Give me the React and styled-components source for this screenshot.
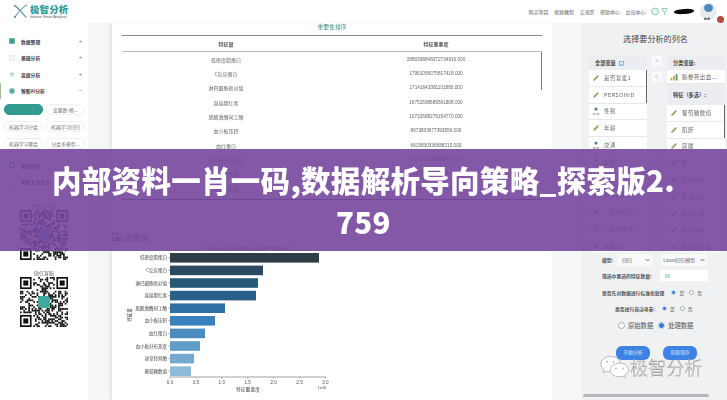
import React from "react";
import styled, { createGlobalStyle } from "styled-components";

const CJK = `"Noto Sans CJK SC", "Liberation Sans", sans-serif`;

const Global = createGlobalStyle`
  html, body { margin: 0; padding: 0; background: #fff; }
  body { font-family: ${CJK}; width: 727px; height: 400px; overflow: hidden; }
  * { box-sizing: border-box; }
`;

const Stage = styled.div`
  position: relative;
  width: 727px;
  height: 400px;
  overflow: hidden;
`;
const Page = styled.div`
  width: 727px;
  height: 400px;
  display: flex;
  flex-direction: column;
  background: #fff;
  filter: blur(0.5px);
`;

/* header */
const Header = styled.header`
  height: 23px;
  flex: none;
  display: flex;
  align-items: center;
  justify-content: space-between;
  padding: 0 3px 0 13px;
  background: #fff;
`;
const Logo = styled.div`
  display: flex;
  align-items: center;
  gap: 2px;
`;
const LogoText = styled.div`
  display: flex;
  flex-direction: column;
  gap: 1px;
`;
const LogoName = styled.div`
  font-size: 9.5px;
  line-height: 10px;
  font-weight: 900;
  letter-spacing: 0.1px;
  color: #2f9c93;
`;
const LogoSub = styled.div`
  font: 3.6px/4px "Liberation Sans", sans-serif;
  color: #555;
`;
const Nav = styled.nav`
  display: flex;
  align-items: center;
`;
const NavLink = styled.span`
  font-size: 5px;
  line-height: 8px;
  color: #666;
  margin-right: 5.5px;
`;
const Scribble = styled.div`
  width: 20px;
  height: 5px;
  margin: 0 6px 0 6px;
  background: #0c0c0c;
  border-radius: 50% 40% 50% 40%;
  transform: rotate(-3deg);
`;
const Avatar = styled.div`
  position: relative;
  width: 17px;
  height: 17px;
  border-radius: 50%;
  background: #e6ebef;
  margin-right: 7px;
  margin-top: -1px;
  display: flex;
  justify-content: center;
`;
const AvatarBlob = styled.div`
  width: 9px;
  height: 8px;
  margin-top: 1px;
  border-radius: 50%;
  background: #4f86c0;
`;
const AvatarName = styled.span`
  position: absolute;
  bottom: -1px;
  left: 4px;
  font: bold 3.5px/4px "Liberation Sans", sans-serif;
  color: #222;
`;
const Badge = styled.span`
  position: absolute;
  right: -7px;
  bottom: -3px;
  width: 7px;
  height: 7px;
  border-radius: 50%;
  background: #b8483a;
`;

/* body */
const Body = styled.div`
  flex: 1;
  min-height: 0;
  display: flex;
`;

/* sidebar */
const Sidebar = styled.aside`
  width: 88px;
  flex: none;
  padding-top: 10px;
  display: flex;
  flex-direction: column;
  background: #fff;
`;
const MenuItem = styled.div`
  height: 16.5px;
  display: flex;
  align-items: center;
  padding-left: 8px;
  padding-right: 6px;
  border-left: 1px solid ${p => (p.$active ? "#9cc79a" : "transparent")};
  font-size: 4.8px;
  font-weight: 700;
  color: #444;
`;
const MenuIconSlot = styled.span`
  width: 6px;
  height: 6px;
  margin-right: 6px;
  display: flex;
`;
const MenuLabel = styled.span`
  flex: 1;
`;
const MenuMark = styled.span`
  font-size: 6px;
  font-weight: 400;
  color: #777;
`;
const SubGrid = styled.div`
  display: grid;
  grid-template-columns: 39px 39px;
  grid-auto-rows: 11px;
  row-gap: 6px;
  column-gap: 3px;
  padding: 5px 0 8px 4px;
`;
const SubBtn = styled.div`
  border-radius: 5px;
  border: 1px solid ${p => (p.$active ? "#329a8e" : "#f0f0f0")};
  background: ${p => (p.$active ? "#329a8e" : "#fff")};
  font-size: 4.8px;
  line-height: 9px;
  text-align: center;
  color: #777;
  white-space: nowrap;
  overflow: hidden;
`;
const QrCaption = styled.div`
  text-align: center;
  font-size: 5px;
  line-height: 7px;
  color: #666;
  margin-top: ${p => p.$top}px;
  margin-bottom: 1px;
`;
const QrBox = styled.div`
  position: relative;
  width: 48px;
  height: 50px;
  margin-left: 20px;
`;
const QrLogo = styled.div`
  position: absolute;
  left: 18px;
  top: 19px;
  width: 12px;
  height: 12px;
  border-radius: 3px;
  background: ${p => p.$color};
`;

/* gutters */
const Gutter = styled.div`
  width: 24px;
  flex: none;
  background: #f6f6f6;
`;
const GutterNarrow = styled.div`
  width: 30px;
  flex: none;
  background: #f7f7f7;
`;

/* main */
const Main = styled.main`
  width: 440px;
  flex: none;
  display: flex;
  flex-direction: column;
  background: #fff;
  box-shadow: -2px 0 3px rgba(0, 0, 0, 0.08);
  overflow: hidden;
`;
const TableCard = styled.section`
  height: 190px;
  padding: 0 10px;
  flex: none;
  box-shadow: 0 1px 3px rgba(0, 0, 0, 0.1);
`;
const TableTitle = styled.div`
  height: 12px;
  padding-top: 1px;
  line-height: 6px;
  font-size: 5.8px;
  text-align: center;
  color: #3c8c88;
`;
const TableFrame = styled.div`
  position: relative;
  height: 165px;
  border-top: 1px solid #888;
  border-bottom: 1px solid #555;
`;
const TableHead = styled.div`
  display: grid;
  grid-template-columns: 208px 212px;
  height: 16px;
  align-items: center;
  text-align: center;
  font-size: 5px;
  font-weight: 600;
  color: #555;
  border-bottom: 1px solid #bbb;
`;
const TableRow = styled.div`
  display: grid;
  grid-template-columns: 208px 212px;
  height: 14.33px;
  align-items: center;
  text-align: center;
  font-size: 5px;
  color: #666;
`;
const TableNum = styled.span`
  font: 4.7px "Liberation Sans", sans-serif;
`;
const TableThumb = styled.div`
  position: absolute;
  right: 0;
  top: 16px;
  width: 1.5px;
  height: 38px;
  background: #777;
`;
const SectionTitle = styled.h3`
  margin: 17px 0 0;
  height: 13px;
  display: flex;
  align-items: center;
  gap: 2px;
  font-size: 8.5px;
  font-weight: 400;
  color: #5a5a5a;
`;
const ChartSvg = styled.svg`
  display: block;
  width: 440px;
  height: 157px;
  flex: none;
`;

/* right panel */
const Panel = styled.aside`
  flex: 1;
  min-width: 0;
  background: #f0f1f3;
  display: flex;
  flex-direction: column;
  padding: 0 2px 0 7px;
`;
const PanelTitle = styled.h2`
  margin: 0;
  height: 33px;
  padding-top: 9px;
  font-size: 8.1px;
  line-height: 14px;
  font-weight: 400;
  color: #444;
  text-align: center;
  padding-right: 3px;
`;
const Transfer = styled.div`
  display: grid;
  grid-template-columns: 58px 20px 58px;
  height: 196px;
`;
const Column = styled.div`
  display: flex;
  flex-direction: column;
  overflow: hidden;
`;
const ColumnHead = styled.div`
  height: ${p => p.$h}px;
  flex: none;
  display: flex;
  align-items: flex-start;
  gap: 3px;
  padding-left: ${p => p.$pad || 6}px;
  padding-top: ${p => p.$top || 3}px;
  font-size: 5.2px;
  line-height: 8px;
  font-weight: 600;
  color: #444;
  background: #ebedf0;
`;
const ListBox = styled.div`
  position: relative;
  flex: 1;
  min-height: 0;
  overflow: hidden;
`;
const ListRow = styled.div`
  height: ${p => p.$h || 16.8}px;
  display: flex;
  align-items: center;
  gap: 4px;
  padding-left: 3px;
  background: #fff;
  border-bottom: 1px solid #e8e8e8;
  font-size: 5.4px;
  letter-spacing: 0.55px;
  color: #666;
  white-space: nowrap;
`;
const ListThumb = styled.div`
  position: absolute;
  right: 0;
  top: 0;
  width: 1.5px;
  height: 33px;
  background: #666;
`;
const Arrows = styled.div`
  display: flex;
  flex-direction: column;
  align-items: center;
  gap: 6px;
  padding-right: 1px;
`;
const ArrowBtn = styled.div`
  width: 10px;
  height: 10px;
  background: #fafafa;
  font: 7px/10px "Liberation Sans", sans-serif;
  text-align: center;
  color: #bbb;
  margin-top: ${p => p.$top || 0}px;
`;
const Form = styled.div`
  display: flex;
  flex-direction: column;
  font-size: 4.8px;
  color: #555;
`;
const FormRow = styled.div`
  display: flex;
  align-items: center;
  height: ${p => p.$h}px;
  padding-left: ${p => p.$pad}px;
`;
const FieldLabel = styled.span`
  font-weight: 600;
  white-space: nowrap;
  color: #555;
`;
const SelectBox = styled.div`
  height: 12px;
  width: ${p => p.$w}px;
  margin-left: ${p => p.$ml}px;
  background: #f8f9fa;
  display: flex;
  align-items: center;
  justify-content: space-between;
  padding: 0 2px 0 ${p => p.$pad}px;
  white-space: nowrap;
  color: #666;
`;
const NumberBox = styled.div`
  width: 48px;
  height: 11px;
  margin-left: 8px;
  background: #fff;
  padding-left: 5px;
  line-height: 11px;
  color: #666;
`;
const RadioDot = styled.span`
  width: ${p => p.$s}px;
  height: ${p => p.$s}px;
  border-radius: 50%;
  flex: none;
  background: ${p => (p.$on ? "#3a7bd0" : "#fff")};
  border: ${p => (p.$on ? `1px solid #cfdcef` : "0.5px solid #aaa")};
  margin: 0 3px 0 ${p => p.$ml || 0}px;
`;
const BigOption = styled.span`
  font-size: 6.3px;
  color: #555;
`;
const RunButtons = styled.div`
  display: flex;
  gap: 13px;
  padding: 10px 0 0 27px;
`;
const RunButton = styled.div`
  width: 34px;
  height: 14px;
  border-radius: 6px;
  background: #3e82e4;
  color: #dce9fb;
  font-size: 4.8px;
  line-height: 12px;
  text-align: center;
`;
const PanelFoot = styled.div`
  margin-top: auto;
  margin-bottom: 3px;
  margin-left: -6px;
  width: 126px;
  height: 3px;
  border-radius: 2px;
  background: #b4b6ba;
`;

/* overlays */
const Banner = styled.div`
  position: absolute;
  left: 0;
  right: 0;
  top: 149px;
  height: 102px;
  padding: 9px 48px 0;
  background: rgba(118, 70, 157, 0.9);
`;
const BannerText = styled.h1`
  margin: 0;
  font-family: ${CJK};
  font-size: 29.5px;
  letter-spacing: 0.3px;
  line-height: 42px;
  font-weight: 900;
  color: #fff;
  text-align: center;
  word-break: break-all;
`;
const Watermark = styled.div`
  position: absolute;
  left: 600px;
  top: 354px;
  display: flex;
  align-items: center;
  gap: 0;
`;
const WatermarkText = styled.span`
  font-size: 18px;
  line-height: 24px;
  font-weight: 300;
  letter-spacing: 0.2px;
  color: rgba(255, 255, 255, 0.85);
  -webkit-text-stroke: 0.4px #8b8b8b;
`;

/* drawings */
function LogoMark() {
  return (
    <svg width="15" height="15" viewBox="0 0 15 15" fill="none">
      <path d="M1 1.5 C5 2 8 9 13.5 13.5" stroke="#5b9c98" strokeWidth="1.3" />
      <path d="M14 1 C9 3 5 9 1.5 13.5" stroke="#7d9c9c" strokeWidth="1.1" />
      <circle cx="2" cy="13" r="1" fill="#3f9c94" />
    </svg>
  );
}
function Pencil({ color = "#a3a36c" }) {
  return (
    <svg width="8" height="8" viewBox="0 0 7 7" style={{ flex: "none" }}>
      <path d="M1 6 L1.4 4.4 L5 .9 L6.1 2 L2.6 5.6 Z" fill={color} />
    </svg>
  );
}
function People() {
  return (
    <svg width="8" height="8" viewBox="0 0 7 7" style={{ flex: "none" }}>
      <circle cx="3.5" cy="1.8" r="1.4" fill="#5b7fae" />
      <path d="M.5 6.5 A1.6 1.6 0 0 1 3.4 6.5Z" fill="#6aa56a" />
      <path d="M3.6 6.5 A1.6 1.6 0 0 1 6.6 6.5Z" fill="#b86a5e" />
    </svg>
  );
}
function Bars() {
  return (
    <svg width="8" height="8" viewBox="0 0 7 7" style={{ flex: "none" }}>
      <rect x=".5" y="4" width="1.5" height="2.5" fill="#c9a73c" />
      <rect x="2.7" y="2.5" width="1.5" height="4" fill="#c9a73c" />
      <rect x="5" y="1" width="1.5" height="5.5" fill="#5b8c5a" />
    </svg>
  );
}
function Chevron() {
  return (
    <svg width="5" height="4" viewBox="0 0 5 4" style={{ flex: "none" }}>
      <path d="M.6 1 L2.5 3 L4.4 1" fill="none" stroke="#555" strokeWidth=".8" />
    </svg>
  );
}
function ListGlyph() {
  return (
    <svg width="5" height="5" viewBox="0 0 5 5" style={{ flex: "none", marginTop: 2 }}>
      <rect x=".4" y=".4" width="4.2" height="4.2" fill="none" stroke="#6f9fd0" strokeWidth=".7" />
      <path d="M1.4 3.4 H3.6" stroke="#6f9fd0" strokeWidth=".6" />
    </svg>
  );
}
function MenuGlyph({ kind }) {
  if (kind === "square")
    return (
      <svg width="6" height="6" viewBox="0 0 6 6">
        <rect width="6" height="6" rx="1" fill="#5fb3a2" />
        <rect x="1.5" y="1.5" width="3" height="3" fill="#3d8f80" />
      </svg>
    );
  if (kind === "outline")
    return (
      <svg width="6" height="6" viewBox="0 0 6 6">
        <rect x=".5" y=".5" width="5" height="5" fill="#f4f6f4" stroke="#dfe4df" strokeWidth=".6" />
      </svg>
    );
  if (kind === "star")
    return (
      <svg width="6" height="6" viewBox="0 0 6 6">
        <path d="M3 0 L3.8 2.1 L6 2.3 L4.3 3.7 L4.9 6 L3 4.7 L1.1 6 L1.7 3.7 L0 2.3 L2.2 2.1 Z" fill="#b9d8cf" />
      </svg>
    );
  if (kind === "circle")
    return (
      <svg width="6" height="6" viewBox="0 0 6 6">
        <circle cx="3" cy="3" r="3" fill="#7fc2b5" />
        <circle cx="3" cy="3" r="1.4" fill="#4b9f90" />
      </svg>
    );
  if (kind === "chart")
    return (
      <svg width="6" height="6" viewBox="0 0 6 6">
        <circle cx="3" cy="3" r="2.6" fill="none" stroke="#4d7fb5" strokeWidth="1.2" />
      </svg>
    );
  return (
    <svg width="6" height="6" viewBox="0 0 6 6">
      <rect x=".5" y=".5" width="5" height="5" fill="none" stroke="#c6ccd2" strokeWidth=".7" />
    </svg>
  );
}
function NavIcons() {
  return (
    <svg width="17" height="9" viewBox="0 0 17 9">
      <circle cx="4" cy="4.5" r="3.4" fill="#e6f3ee" stroke="#8ccab6" strokeWidth="1" />
      <path d="M11 1.5 H16 L15.4 4 Q13.5 6 11.6 4 Z M13.5 5.5 V8" fill="none" stroke="#93cdb8" strokeWidth="1" />
    </svg>
  );
}
function ImageGlyph() {
  return (
    <svg width="10" height="8" viewBox="0 0 10 8">
      <rect x=".5" y=".5" width="9" height="7" fill="none" stroke="#555" strokeWidth=".8" />
      <path d="M1.5 6.5 L4 3.5 L5.5 5 L7 3.5 L8.5 6.5 Z" fill="#555" />
    </svg>
  );
}
function WeChat() {
  return (
    <svg width="30" height="25" viewBox="0 0 31 25">
      <g fill="rgba(255,255,255,.95)" stroke="#9a9a9a" strokeWidth=".7">
        <path d="M11 2 C4.5 2 1 6 1 10 C1 12.6 2.4 14.6 4.4 16 L3.4 19 L7 17.3 C8.4 17.8 9.6 18 11 18 C17 18 21 14.5 21 10 C21 6 17 2 11 2 Z" />
        <path d="M20 9 C14.5 9 10.5 12.4 10.5 16 C10.5 20 14.5 23 20 23 C21.2 23 22.2 22.8 23.2 22.5 L26.4 24 L25.6 21.4 C27.8 20 29.5 18.2 29.5 16 C29.5 12.4 25.5 9 20 9 Z" />
      </g>
      <g fill="#b5b5b5">
        <circle cx="7.5" cy="7.5" r="1" />
        <circle cx="14" cy="7.5" r="1" />
        <circle cx="16.5" cy="14.5" r=".9" />
        <circle cx="23.5" cy="14.5" r=".9" />
      </g>
    </svg>
  );
}

function qrCells(seed) {
  const n = 29;
  const out = [];
  let s = seed;
  const inFinder = (x, y) =>
    (x < 8 && y < 8) || (x > n - 9 && y < 8) || (x < 8 && y > n - 9);
  for (let y = 0; y < n; y++) {
    for (let x = 0; x < n; x++) {
      s = (s * 1103515245 + 12345) & 0x7fffffff;
      if (!inFinder(x, y) && (s >> 16) % 100 < 50) out.push([x, y]);
    }
  }
  return out;
}
function Finder({ x, y, fg }) {
  return (
    <g>
      <rect x={x} y={y} width="7" height="7" fill={fg} />
      <rect x={x + 1} y={y + 1} width="5" height="5" fill="#fff" />
      <rect x={x + 2} y={y + 2} width="3" height="3" fill={fg} />
    </g>
  );
}
function Qr({ seed, logo }) {
  const cells = React.useMemo(() => qrCells(seed), [seed]);
  return (
    <QrBox>
      <svg width="48" height="50" viewBox="0 0 29 29" preserveAspectRatio="none">
        {cells.map(([x, y]) => (
          <rect key={x + "-" + y} x={x} y={y} width="1.02" height="1.02" fill="#111" />
        ))}
        <Finder x={0} y={0} fg="#111" />
        <Finder x={22} y={0} fg="#111" />
        <Finder x={0} y={22} fg="#111" />
      </svg>
      <QrLogo $color={logo} />
    </QrBox>
  );
}

/* data */
const rows = [
  ["低密度脂蛋白", "2880398848372734916.000"],
  ["C反应蛋白", "17951056075817418.000"],
  ["淋巴细胞绝对值", "17141643381101880.000"],
  ["直接胆红素", "16752698689591808.000"],
  ["肌酸激酶同工酶", "10732688279154770.000"],
  ["血小板压积", "8673833677393556.000"],
  ["血红蛋白", "6615830336688215.000"],
  ["血小板分布宽度", "5874710486008454.000"],
  ["谷草转氨酶", "4512036689215.000"],
  ["葡萄糖数值", "3987154620078.000"],
];

const bars = [
  [149, "#2e3f47"],
  [93, "#2b4a5f"],
  [88, "#285a78"],
  [86, "#2a6088"],
  [55, "#2e70a8"],
  [45, "#3a80bd"],
  [35, "#4a8cbf"],
  [30, "#5f9dc9"],
  [24, "#75a9d0"],
  [21, "#8cbad9"],
];

const leftList = [
  ["pencil", "是否复发1"],
  ["pencil", "PERSONID"],
  ["people", "性别"],
  ["pencil", "年龄"],
  ["people", "交通"],
  ["people", "吸烟"],
  ["people", "饮酒"],
  ["pencil", "生存时间(W..."],
  ["pencil", "入队利息门..."],
  ["pencil", "入队利息住..."],
  ["pencil", "标准.cpi"],
];
const rightList = [
  "葡萄糖数值",
  "肌酐",
  "尿酸",
  "钾",
  "肌酸激酶",
  "甘油三酯",
  "首次入院...",
  "肌酸激酶...",
  "肾功酌行变",
];

function RowIcon({ kind }) {
  return kind === "people" ? <People /> : <Pencil />;
}

function Chart() {
  const x0 = 58;
  const ticks = ["0.0", "0.5", "1.0", "1.5", "2.0", "2.5", "3.0"];
  return (
    <ChartSvg viewBox="0 0 440 157">
      <text x="136" y="7" textAnchor="middle" fontSize="4.6" fontFamily="Liberation Mono, monospace" fill="#444">
        Feature Importance (Coefficient)
      </text>
      {bars.map(([w, c], i) => (
        <g key={i}>
          <rect x={x0} y={10 + i * 12.6} width={w} height={9.6} fill={c} />
          <line x1={x0 - 2} x2={x0} y1={14.8 + i * 12.6} y2={14.8 + i * 12.6} stroke="#555" strokeWidth=".4" />
          <text x={x0 - 3} y={16.4 + i * 12.6} textAnchor="end" fontSize="4.5" fontFamily={CJK} fill="#444">
            {rows[i][0]}
          </text>
        </g>
      ))}
      <line x1={x0} x2={x0 + 156} y1="134" y2="134" stroke="#666" strokeWidth=".6" />
      {ticks.map((t, i) => (
        <g key={t}>
          <line x1={x0 + i * 25.9} x2={x0 + i * 25.9} y1="134" y2="136" stroke="#666" strokeWidth=".4" />
          <text x={x0 + i * 25.9} y="141" textAnchor="middle" fontSize="4.6" fontFamily="Liberation Sans, sans-serif" fill="#555">
            {t}
          </text>
        </g>
      ))}
      <text x="136" y="147.5" textAnchor="middle" fontSize="4.8" fontFamily={CJK} fill="#444">
        特征重要度
      </text>
      <text x="210" y="146" textAnchor="middle" fontSize="3.8" fontFamily="Liberation Sans, sans-serif" fill="#444">
        1e16
      </text>
      <text transform="translate(19 72) rotate(-90)" textAnchor="middle" fontSize="4.5" fontFamily={CJK} fill="#444">
        特征量
      </text>
    </ChartSvg>
  );
}

export default function App() {
  return (
    <Stage>
      <Global />
      <Page>
        <Header>
          <Logo>
            <LogoMark />
            <LogoText>
              <LogoName>极智分析</LogoName>
              <LogoSub>Intense Smart Analysis</LogoSub>
            </LogoText>
          </Logo>
          <Nav>
            <NavLink>购买项目</NavLink>
            <NavLink>视频教程</NavLink>
            <NavLink>交流区</NavLink>
            <NavLink>帮助中心</NavLink>
            <NavLink>会员中心</NavLink>
            <NavIcons />
            <Scribble />
            <Avatar>
              <AvatarBlob />
              <AvatarName>dsfr</AvatarName>
              <Badge />
            </Avatar>
          </Nav>
        </Header>
        <Body>
          <Sidebar>
            <MenuItem><MenuIconSlot><MenuGlyph kind="square" /></MenuIconSlot><MenuLabel>数据整理</MenuLabel><MenuMark>+</MenuMark></MenuItem>
            <MenuItem><MenuIconSlot><MenuGlyph kind="outline" /></MenuIconSlot><MenuLabel>基础分析</MenuLabel><MenuMark>+</MenuMark></MenuItem>
            <MenuItem><MenuIconSlot><MenuGlyph kind="star" /></MenuIconSlot><MenuLabel>高级分析</MenuLabel><MenuMark>+</MenuMark></MenuItem>
            <MenuItem $active><MenuIconSlot><MenuGlyph kind="circle" /></MenuIconSlot><MenuLabel>智能AI分析</MenuLabel><MenuMark>−</MenuMark></MenuItem>
            <SubGrid>
              <SubBtn $active />
              <SubBtn>变量数-模...</SubBtn>
              <SubBtn>机器学习分类</SubBtn>
              <SubBtn>机器学习回归</SubBtn>
              <SubBtn>机器学习聚类</SubBtn>
              <SubBtn>分类多模型...</SubBtn>
            </SubGrid>
            <MenuItem><MenuIconSlot><MenuGlyph kind="chart" /></MenuIconSlot><MenuLabel>图表制作</MenuLabel><MenuMark>+</MenuMark></MenuItem>
            <MenuItem><MenuIconSlot><MenuGlyph kind="doc" /></MenuIconSlot><MenuLabel>智能大事生成</MenuLabel></MenuItem>
            <QrCaption $top={12}>平台公众号</QrCaption>
            <Qr seed={17} logo="#4f8fb5" />
            <QrCaption $top={9}>微信客服</QrCaption>
            <Qr seed={91} logo="#3fa9a0" />
          </Sidebar>
          <Gutter />
          <Main>
            <TableCard>
              <TableTitle>重要性排序</TableTitle>
              <TableFrame>
                <TableHead><span>特征量</span><span>特征重要度</span></TableHead>
                {rows.map(([a, b]) => (
                  <TableRow key={a}><span>{a}</span><TableNum>{b}</TableNum></TableRow>
                ))}
                <TableThumb />
              </TableFrame>
            </TableCard>
            <SectionTitle><ImageGlyph />结果图</SectionTitle>
            <Chart />
          </Main>
          <GutterNarrow />
          <Panel>
            <PanelTitle>选择要分析的列名</PanelTitle>
            <Transfer>
              <Column>
                <ColumnHead $h={14}>全部变量<ListGlyph /></ColumnHead>
                <ListBox>
                  {leftList.map(([k, t]) => (
                    <ListRow key={t}><RowIcon kind={k} />{t}</ListRow>
                  ))}
                  <ListThumb />
                </ListBox>
              </Column>
              <Arrows>
                <ArrowBtn>&gt;</ArrowBtn>
                <ArrowBtn>&lt;</ArrowBtn>
                <ArrowBtn $top={62}>&gt;</ArrowBtn>
              </Arrows>
              <Column>
                <ColumnHead $h={14}>分类变量:</ColumnHead>
                <ListRow $h={14}><Bars />贴梗死出血...</ListRow>
                <ColumnHead $h={21} $top={7}>特征（多选）:</ColumnHead>
                <ListBox>
                  {rightList.map(t => (
                    <ListRow key={t}><Pencil />{t}</ListRow>
                  ))}
                  <ListThumb />
                </ListBox>
              </Column>
            </Transfer>
            <Form>
              <FormRow $h={15} $pad={13}>
                <FieldLabel>模型:</FieldLabel>
                <SelectBox $w={35} $ml={4} $pad={5}>回归<Chevron /></SelectBox>
                <SelectBox $w={46} $ml={9} $pad={2}>Lasso回归模型<Chevron /></SelectBox>
              </FormRow>
              <FormRow $h={17} $pad={13}>
                <FieldLabel>筛选中要选的特征数量:</FieldLabel>
                <NumberBox>10</NumberBox>
              </FormRow>
              <FormRow $h={17} $pad={13}>
                <FieldLabel>是否先对数据进行标准化处理</FieldLabel>
                <RadioDot $on $s={5} $ml={7} />是
                <RadioDot $s={5} $ml={5} />否
              </FormRow>
              <FormRow $h={14} $pad={26}>
                <FieldLabel>是否进行自动寻参:</FieldLabel>
                <RadioDot $on $s={5} $ml={7} />是
                <RadioDot $s={5} $ml={5} />否
              </FormRow>
              <FormRow $h={21} $pad={29}>
                <RadioDot $s={7} />
                <BigOption>原始数据</BigOption>
                <RadioDot $on $s={7} $ml={5} />
                <BigOption>处理数据</BigOption>
              </FormRow>
            </Form>
            <RunButtons>
              <RunButton>开始分析</RunButton>
              <RunButton>获取保存</RunButton>
            </RunButtons>
            <PanelFoot />
          </Panel>
        </Body>
      </Page>
      <Banner>
        <BannerText>内部资料一肖一码,数据解析导向策略_探索版2.759</BannerText>
      </Banner>
      <Watermark>
        <WeChat />
        <WatermarkText>极智分析</WatermarkText>
      </Watermark>
    </Stage>
  );
}
